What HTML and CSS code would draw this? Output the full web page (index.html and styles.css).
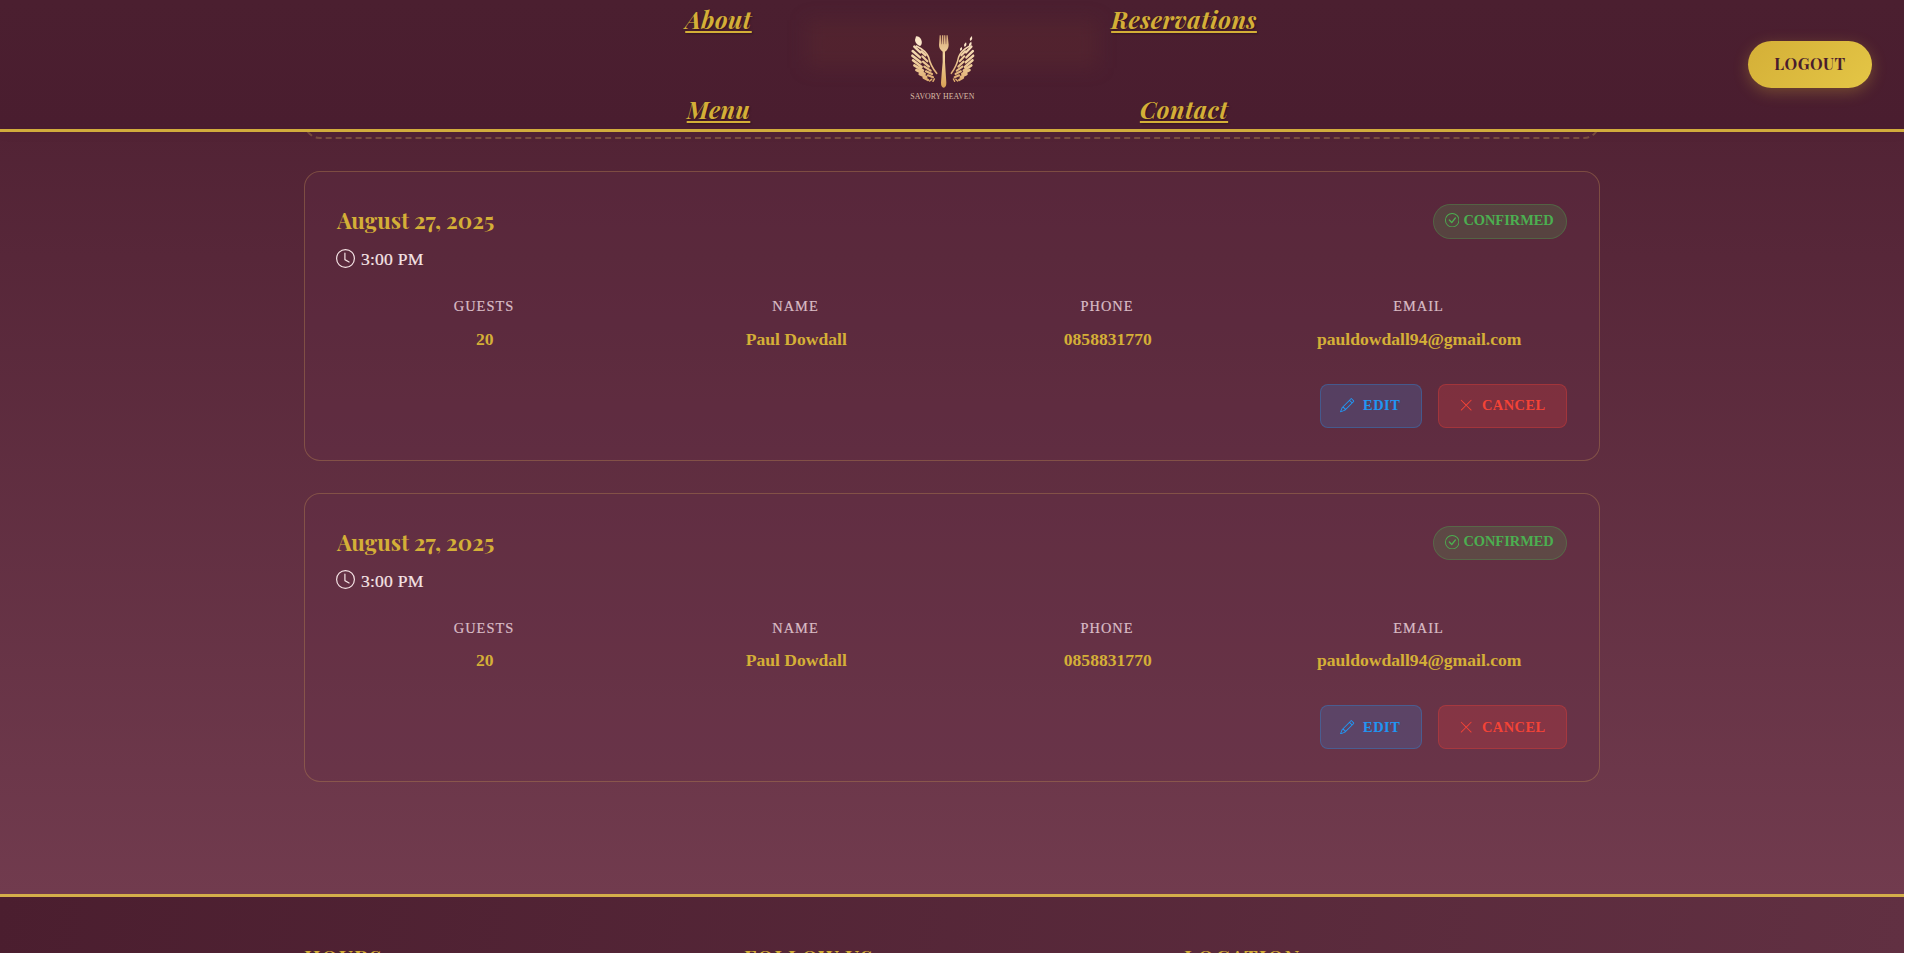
FILE: index.html
```html
<!DOCTYPE html>
<html lang="en">
<head>
<meta charset="utf-8">
<title>Savory Heaven - Reservations</title>
<link rel="stylesheet" href="styles.css">
</head>
<body>
<svg class="sprite" aria-hidden="true">
  <symbol id="clock" viewBox="0 0 16 16"><path d="M8 3.5a.5.5 0 0 0-1 0V9a.5.5 0 0 0 .252.434l3.5 2a.5.5 0 0 0 .496-.868L8 8.71z"/><path d="M8 16A8 8 0 1 0 8 0a8 8 0 0 0 0 16m7-8A7 7 0 1 1 1 8a7 7 0 0 1 14 0"/></symbol>
  <symbol id="check" viewBox="0 0 16 16"><path d="M8 15A7 7 0 1 1 8 1a7 7 0 0 1 0 14m0 1A8 8 0 1 0 8 0a8 8 0 0 0 0 16"/><path d="m10.97 4.97-.02.022-3.473 4.425-2.093-2.094a.75.75 0 0 0-1.06 1.06L6.97 11.03a.75.75 0 0 0 1.079-.02l3.992-4.99a.75.75 0 0 0-1.071-1.05"/></symbol>
  <symbol id="pencil" viewBox="0 0 16 16"><path d="M12.146.146a.5.5 0 0 1 .708 0l3 3a.5.5 0 0 1 0 .708l-10 10a.5.5 0 0 1-.168.11l-5 2a.5.5 0 0 1-.65-.65l2-5a.5.5 0 0 1 .11-.168zM11.207 2.5 13.5 4.793 14.793 3.5 12.5 1.207zm1.586 3L10.5 3.207 4 9.707V10h.5a.5.5 0 0 1 .5.5v.5h.5a.5.5 0 0 1 .5.5v.5h.293zm-9.761 5.175-.106.106-1.528 3.821 3.821-1.528.106-.106A.5.5 0 0 1 5 12.5V12h-.5a.5.5 0 0 1-.5-.5V11h-.5a.5.5 0 0 1-.468-.325"/></symbol>
  <symbol id="cross" viewBox="0 0 16 16"><path d="M2.146 2.854a.5.5 0 1 1 .708-.708L8 7.293l5.146-5.147a.5.5 0 0 1 .708.708L8.707 8l5.147 5.146a.5.5 0 0 1-.708.708L8 8.707l-5.146 5.147a.5.5 0 0 1-.708-.708L7.293 8z"/></symbol>
</svg>

<header class="site-header">
  <nav class="nav-col">
    <a class="nav-link" href="#">About</a>
    <a class="nav-link" href="#">Menu</a>
  </nav>
  <div class="brand">
    <svg class="logo" viewBox="0 0 330 270" role="img">
      <defs>
        <linearGradient id="gold" x1="60" y1="45" x2="140" y2="190" gradientUnits="userSpaceOnUse"><stop offset="0" stop-color="#fbe9cf"/><stop offset=".5" stop-color="#efcd9b"/><stop offset="1" stop-color="#d9a263"/></linearGradient>
        <linearGradient id="forkGold" x1="0" y1="45" x2="0" y2="203" gradientUnits="userSpaceOnUse"><stop offset="0" stop-color="#d6a878"/><stop offset=".4" stop-color="#f3d5a0"/><stop offset="1" stop-color="#d9a054"/></linearGradient>
        <g id="feathers" fill="none" stroke-linecap="round" stroke-width="7.5">
          <path d="M73 80L91 97M68 93L90 112M67 107L92 127M69 121L95 141M73 136L99 152M79 150L104 162M89 162L109 171M101 173L114 180"/>
          <path stroke-width="6.5" d="M94 94L107 106M97 109L112 124M99 125L117 140M103 140L122 152M108 154L126 162M114 166L129 172"/>
          <path stroke-width="4.5" d="M119 183L125 178M129 184L133 177"/>
          <path stroke-width="5" d="M79 78Q108 92 116 112Q121 136 140 160"/>
        </g>
      </defs>
      <path fill="#fbe6c8" d="M78 49Q92 49 95 63Q97 74 90 78Q76 72 75 60Z"/>
      <use href="#feathers" stroke="url(#gold)"/>
      <use href="#feathers" stroke="url(#gold)" transform="translate(310 0) scale(-.9 1)"/>
      <path fill="#fbe6c8" d="M246 48Q249 56 242 63Q235 57 246 48M244 65Q247 76 238 79Q234 71 244 65M228 67Q232 76 224 81Q219 74 228 67M214 81Q220 88 211 93Q207 87 214 81"/>
      <path fill="url(#forkGold)" d="M149 46L152.500 46 153.500 73 154.500 73 156 46 160 46 160.500 73 161.500 73 162.500 46 166 46 167.500 73 168.500 73 169.500 46 173 46 176 74Q176 88 165 95L165 126Q167 158 169 188Q169 202 161 203Q153 202 153 188Q155 158 158 126L158 95Q147 88 147 75Z"/>
      <text class="logo-text" x="61" y="236" textLength="192">SAVORY HEAVEN</text>
    </svg>
  </div>
  <nav class="nav-col">
    <a class="nav-link" href="#">Reservations</a>
    <a class="nav-link" href="#">Contact</a>
  </nav>
  <div class="account"><button class="logout">LOGOUT</button></div>
</header>

<main class="content">
  <div class="notice"></div>

  <article class="card">
    <div class="card-head">
      <div>
        <h2 class="date">August 27, 2025</h2>
        <p class="time"><svg class="clock"><use href="#clock"/></svg>3:00 PM</p>
      </div>
      <span class="badge"><svg class="icon"><use href="#check"/></svg>CONFIRMED</span>
    </div>
    <dl class="details">
      <div><dt>GUESTS</dt><dd>20</dd></div>
      <div><dt>NAME</dt><dd>Paul Dowdall</dd></div>
      <div><dt>PHONE</dt><dd>0858831770</dd></div>
      <div><dt>EMAIL</dt><dd>pauldowdall94@gmail.com</dd></div>
    </dl>
    <div class="actions">
      <button class="btn edit"><svg class="icon"><use href="#pencil"/></svg>EDIT</button>
      <button class="btn cancel"><svg class="icon"><use href="#cross"/></svg>CANCEL</button>
    </div>
  </article>

  <article class="card">
    <div class="card-head">
      <div>
        <h2 class="date">August 27, 2025</h2>
        <p class="time"><svg class="clock"><use href="#clock"/></svg>3:00 PM</p>
      </div>
      <span class="badge"><svg class="icon"><use href="#check"/></svg>CONFIRMED</span>
    </div>
    <dl class="details">
      <div><dt>GUESTS</dt><dd>20</dd></div>
      <div><dt>NAME</dt><dd>Paul Dowdall</dd></div>
      <div><dt>PHONE</dt><dd>0858831770</dd></div>
      <div><dt>EMAIL</dt><dd>pauldowdall94@gmail.com</dd></div>
    </dl>
    <div class="actions">
      <button class="btn edit"><svg class="icon"><use href="#pencil"/></svg>EDIT</button>
      <button class="btn cancel"><svg class="icon"><use href="#cross"/></svg>CANCEL</button>
    </div>
  </article>
</main>

<footer class="site-footer">
  <h3>HOURS</h3>
  <h3>FOLLOW US</h3>
  <h3>LOCATION</h3>
</footer>
</body>
</html>
```
FILE: styles.css
```css
* { box-sizing: border-box; margin: 0; }

html { background: #fff; overflow: hidden; }

body {
  width: 1904px;
  height: 953px;
  overflow: hidden;
  display: flex;
  flex-direction: column;
  font-family: "Playfair Display", "Liberation Serif", serif;
  color: #d4af37;
}

.sprite { position: absolute; width: 0; height: 0; }

/* Header */
.site-header {
  position: relative;
  z-index: 1;
  flex: none;
  height: 132px;
  padding: 0 32px 0 606px;
  display: grid;
  grid-template-columns: 225px 225px 256px 1fr;
  background: linear-gradient(#4b1f30, #4a1d2f);
  border-bottom: 3px solid #d1ac3c;
  box-shadow: 0 2px 10px rgba(0, 0, 0, .06);
}

.site-header::before {
  content: "";
  position: absolute;
  left: 806px;
  top: 20px;
  width: 292px;
  height: 48px;
  background: rgba(105, 50, 45, .24);
  filter: blur(9px);
}

.nav-col {
  display: flex;
  flex-direction: column;
  align-items: center;
  gap: 60px;
  padding-top: 4px;
}

.nav-link {
  font-size: 24px;
  line-height: 30px;
  font-weight: 700;
  font-style: italic;
  letter-spacing: .45px;
  color: #d4af37;
  text-decoration: underline 2px;
  text-underline-offset: 2px;
  text-shadow: 1px 1px 2px rgba(0, 0, 0, .35);
}

.brand {
  position: relative;
  display: flex;
  justify-content: center;
  padding-top: 20px;
}

.logo { width: 110px; height: 90px; margin-left: 3px; }

.logo-text { font: 23.5px "Liberation Serif", serif; fill: #d9bda6; }

.account { display: flex; justify-content: flex-end; padding-top: 41px; }

.logout {
  width: 124px;
  height: 47px;
  padding: 0 0 2px;
  border: 0;
  border-radius: 24px;
  background: linear-gradient(135deg, #d4af37, #e4c646);
  box-shadow: 0 4px 15px rgba(212, 175, 55, .3);
  color: #4a1c2d;
  font: 700 16px "Playfair Display", "Liberation Serif", serif;
  letter-spacing: .5px;
}

/* Reservations */
.content {
  flex: none;
  height: 762px;
  padding: 0 304px;
  background: linear-gradient(#522335, #713b4e);
}

.notice {
  height: 7px;
  margin-bottom: 32px;
  position: relative;
}

.notice::after {
  content: "";
  position: absolute;
  left: 0;
  right: 0;
  bottom: 0;
  height: 60px;
  border: 2px dashed rgba(212, 175, 85, .3);
  border-radius: 16px;
}

.card {
  height: 289.6px;
  margin-bottom: 32px;
  padding: 32px;
  border: 1px solid rgba(212, 165, 85, .3);
  border-radius: 16px;
  background: rgba(98, 48, 68, .3);
}

.card-head {
  display: flex;
  justify-content: space-between;
  align-items: flex-start;
}

.date { font-size: 22.4px; line-height: 34px; margin-top: -1px; height: 35px; }

.time {
  display: flex;
  align-items: center;
  gap: 6px;
  height: 26px;
  margin-top: 8px;
  font: 17.6px/26px "Liberation Serif", serif;
  letter-spacing: .2px;
  color: #f6e4e6;
  -webkit-text-stroke: .2px #f6e4e6;
}

.clock { width: 19px; height: 19px; fill: currentColor; margin-left: -1px; margin-top: -2px; }

.icon { width: 14.4px; height: 14.4px; fill: currentColor; }

.badge {
  display: flex;
  align-items: center;
  gap: 4px;
  width: 134px;
  height: 34.6px;
  padding: 0 0 2px 11px;
  border: 1px solid rgba(76, 175, 80, .3);
  border-radius: 18px;
  background: rgba(76, 175, 80, .2);
  font: 700 14.4px "Liberation Serif", serif;
  color: #4caf50;
}

.details {
  display: grid;
  grid-template-columns: repeat(4, 1fr);
  gap: 16px;
  margin-top: 23px;
  text-align: center;
}

.details dt {
  padding-right: 1.5px;
  font: 14.4px/22px "Liberation Serif", serif;
  letter-spacing: 1px;
  color: #d9bcc5;
  -webkit-text-stroke: .2px #d9bcc5;
}

.details dd {
  margin-top: 9.6px;
  font: 700 17.6px/25px "Liberation Serif", serif;
}

.actions {
  display: flex;
  justify-content: flex-end;
  gap: 16px;
  margin-top: 32px;
}

.btn {
  display: flex;
  align-items: center;
  gap: 8.5px;
  height: 44px;
  padding: 0 0 0 19.2px;
  border: 1px solid;
  border-radius: 8px;
  font: 700 14.4px "Liberation Serif", serif;
  letter-spacing: .5px;
}

.edit {
  width: 102px;
  color: #2196f3;
  background: rgba(66, 110, 175, .3);
  border-color: rgba(33, 150, 243, .3);
}

.cancel {
  width: 129px;
  padding-left: 20px;
  color: #f44336;
  background: rgba(220, 60, 60, .25);
  border-color: rgba(244, 67, 54, .3);
}

/* Footer */
.site-footer {
  flex: 1;
  padding: 48px 304px 0;
  display: grid;
  grid-template-columns: 440px 440px 1fr;
  border-top: 3px solid #d4af4a;
  background: linear-gradient(100deg, #4b1e2f, #613042);
  overflow: hidden;
}

.site-footer h3 {
  font-size: 20.8px;
  line-height: 25px;
  letter-spacing: .9px;
}
```
